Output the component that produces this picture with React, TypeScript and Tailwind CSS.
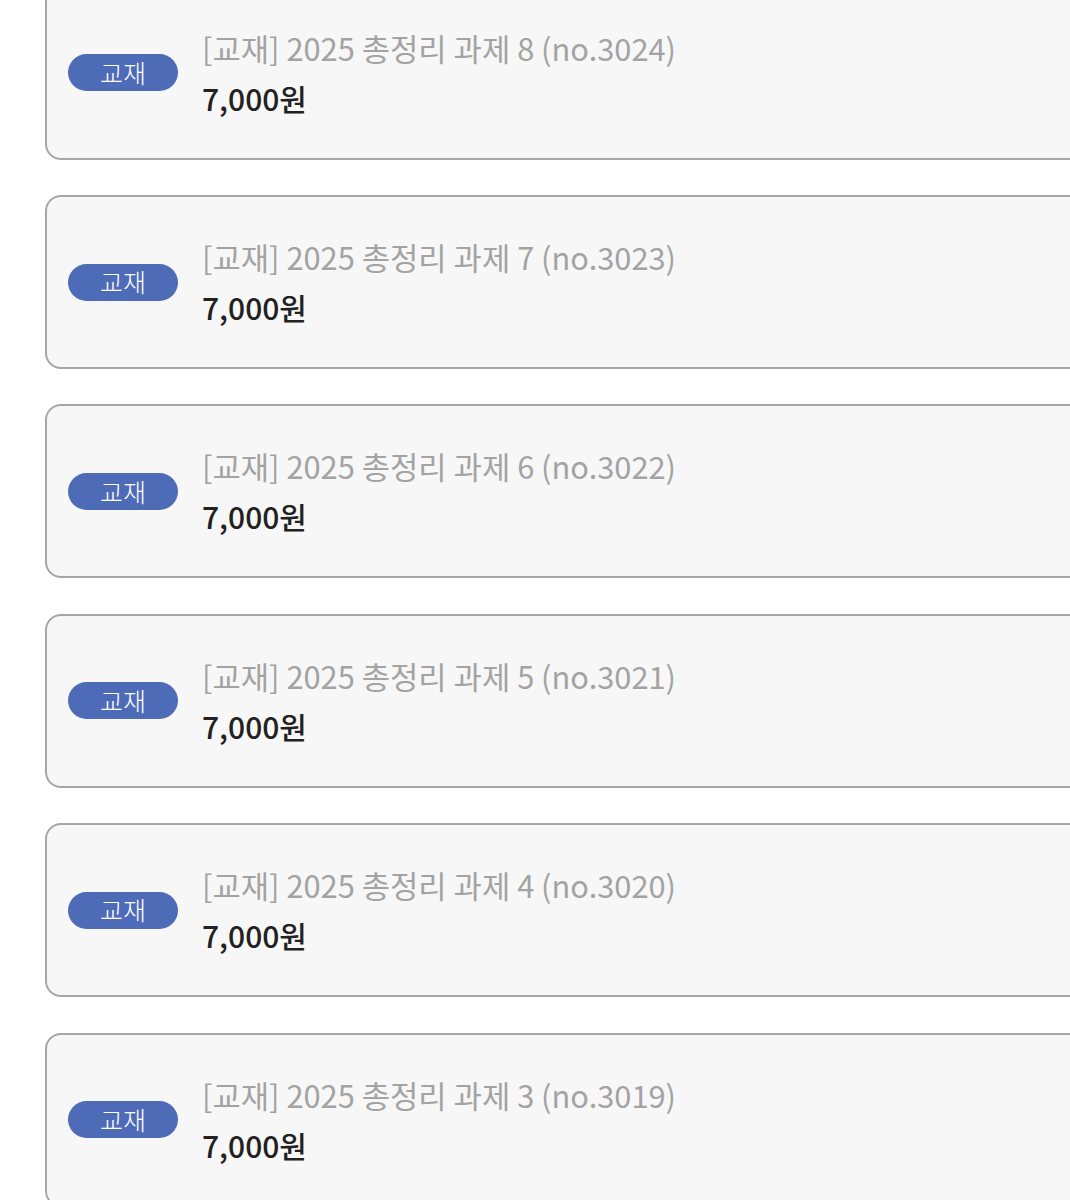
import React from 'react';

const items = [
  { id: 3024, no: 8 },
  { id: 3023, no: 7 },
  { id: 3022, no: 6 },
  { id: 3021, no: 5 },
  { id: 3020, no: 4 },
  { id: 3019, no: 3 },
];

const App: React.FC = () => {
  return (
    <div
      className="h-[1200px] w-[1070px] overflow-hidden bg-white"
      style={{ fontFamily: '"Noto Sans CJK KR", "Noto Sans", sans-serif' }}
    >
      <div className="mt-[-14.4px] flex w-[1100px] flex-col gap-[35.4px] pl-[45px]">
        {items.map((item) => (
          <div
            key={item.id}
            className="flex h-[174px] items-center rounded-[16px] border-2 border-[#a6a6a6] bg-[#f7f7f7] pl-[21px]"
          >
            <span className="flex h-[37px] w-[110px] shrink-0 items-center justify-center rounded-full bg-[#4e6bb8] text-[25px] font-light text-white">
              교재
            </span>
            <div className="ml-[24px] flex flex-col gap-[8px]">
              <p className="text-[30.8px] leading-[43px] text-[#a3a3a3]">
                [교재] 2025 총정리 과제 {item.no} (no.{item.id})
              </p>
              <p className="text-[30px] font-medium leading-[43px] text-[#222222]">7,000원</p>
            </div>
          </div>
        ))}
      </div>
    </div>
  );
};

export default App;
